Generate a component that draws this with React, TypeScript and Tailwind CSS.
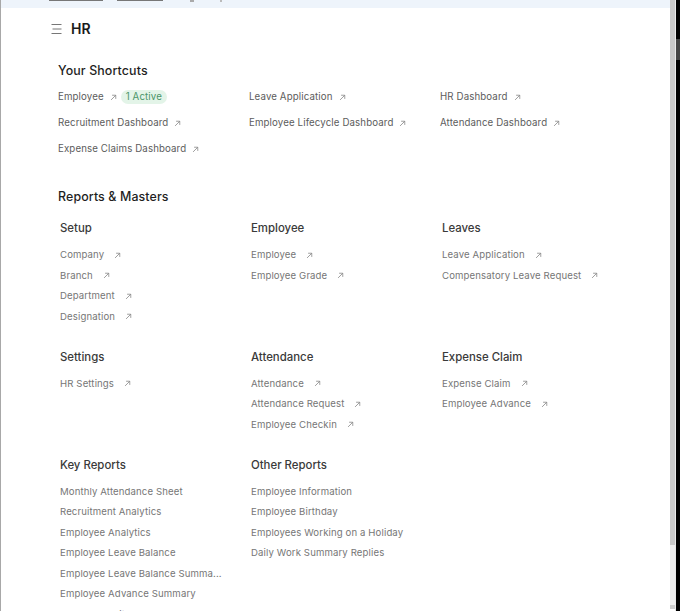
import React from "react";

const ArrowIcon = () => (
  <svg width="7" height="7" viewBox="0 0 8 8" fill="none" stroke="#858585" strokeWidth="0.9" className="shrink-0">
    <path d="M1.2 6.8 L6.6 1.4 M2.4 1.4 H6.6 V5.6" />
  </svg>
);

const LinkRow = ({ label, arrow = true }: { label: string; arrow?: boolean }) => (
  <div className="flex items-center gap-2.5 h-[20.5px] text-[9.6px] tracking-[0.12px] text-[#767676]">
    <span className="whitespace-nowrap">{label}</span>
    {arrow && <ArrowIcon />}
  </div>
);

const Shortcut = ({ label, badge }: { label: string; badge?: string }) => (
  <div className="flex items-center gap-1.5 h-[18px] text-[9.7px] tracking-[0.12px] text-[#5c5c5c]">
    <span className="whitespace-nowrap">{label}</span>
    <ArrowIcon />
    {badge && (
      <span className="-ml-0.5 rounded-full bg-[#e3f4e8] px-[5px] h-[14px] flex items-center text-[#4a9468] whitespace-nowrap">{badge}</span>
    )}
  </div>
);

const Card = ({ title, links, arrow = true }: { title: string; links: string[]; arrow?: boolean }) => (
  <div>
    <h3 className="text-[11.4px] leading-[16px] font-medium text-[#3a3a3a]">{title}</h3>
    <div className="mt-[9px]">
      {links.map((link) => (
        <LinkRow key={link} label={link} arrow={arrow} />
      ))}
    </div>
  </div>
);

export default function App() {
  return (
    <div className="h-[611px] w-[680px] overflow-hidden flex bg-white font-['Inter',sans-serif]">
      <div className="w-px bg-[#a8a8a8]" />
      <div className="flex-1 min-w-0">
        <div className="h-2 bg-[#eef4fb] overflow-hidden flex gap-[14px] pl-[48px] items-start">
          <div className="w-[54px] h-px bg-[#777]" />
          <div className="w-[46px] h-px bg-[#777]" />
          <div className="w-[4px] h-[2px] ml-[13px] bg-[#aaa]" />
          <div className="w-[2px] h-[2px] ml-[12px] bg-[#bbb]" />
        </div>
        <div className="flex items-center gap-[9px] mt-[13px] pl-[50px] h-4">
          <svg width="11" height="10" viewBox="0 0 11 10" stroke="#777" strokeWidth="1" fill="none">
            <path d="M0.5 0.5H10.5M1.5 5H10.5M0.5 9.5H10.5" />
          </svg>
          <h1 className="text-[14px] font-semibold text-[#1a1a1a] -mt-0.5">HR</h1>
        </div>
        <h2 className="mt-[26px] ml-[57px] text-[12.4px] leading-4 font-medium tracking-[0.12px] text-[#1f1f1f]">Your Shortcuts</h2>
        <div className="mt-[9px] ml-[57px] grid grid-cols-[191px_191px_191px] gap-y-[8px]">
          <Shortcut label="Employee" badge="1 Active" />
          <Shortcut label="Leave Application" />
          <Shortcut label="HR Dashboard" />
          <Shortcut label="Recruitment Dashboard" />
          <Shortcut label="Employee Lifecycle Dashboard" />
          <Shortcut label="Attendance Dashboard" />
          <Shortcut label="Expense Claims Dashboard" />
        </div>
        <h2 className="mt-[31px] ml-[57px] text-[12.4px] leading-4 font-medium tracking-[0.12px] text-[#1f1f1f]">Reports &amp; Masters</h2>
        <div className="mt-[15px] ml-[59px] grid grid-cols-[191px_191px_191px] gap-y-[21.5px]">
          <Card title="Setup" links={["Company", "Branch", "Department", "Designation"]} />
          <Card title="Employee" links={["Employee", "Employee Grade"]} />
          <Card title="Leaves" links={["Leave Application", "Compensatory Leave Request"]} />
          <Card title="Settings" links={["HR Settings"]} />
          <Card title="Attendance" links={["Attendance", "Attendance Request", "Employee Checkin"]} />
          <Card title="Expense Claim" links={["Expense Claim", "Employee Advance"]} />
          <Card
            title="Key Reports"
            arrow={false}
            links={[
              "Monthly Attendance Sheet",
              "Recruitment Analytics",
              "Employee Analytics",
              "Employee Leave Balance",
              "Employee Leave Balance Summa...",
              "Employee Advance Summary",
              "Employee Exits",
            ]}
          />
          <Card
            title="Other Reports"
            arrow={false}
            links={["Employee Information", "Employee Birthday", "Employees Working on a Holiday", "Daily Work Summary Replies"]}
          />
        </div>
      </div>
      <div className="w-[5px] flex flex-col">
        <div className="h-[545px] bg-[#c8c8c8]" />
        <div className="flex-1 bg-[#eeeeee]" />
        <div className="h-1 mb-0.5 bg-[#cccccc]" />
      </div>
      <div className="w-px bg-[#e8e8e8]" />
      <div className="w-1 bg-black">
        <div className="h-[21px] mt-[39px] bg-[#444]" />
      </div>
    </div>
  );
}
